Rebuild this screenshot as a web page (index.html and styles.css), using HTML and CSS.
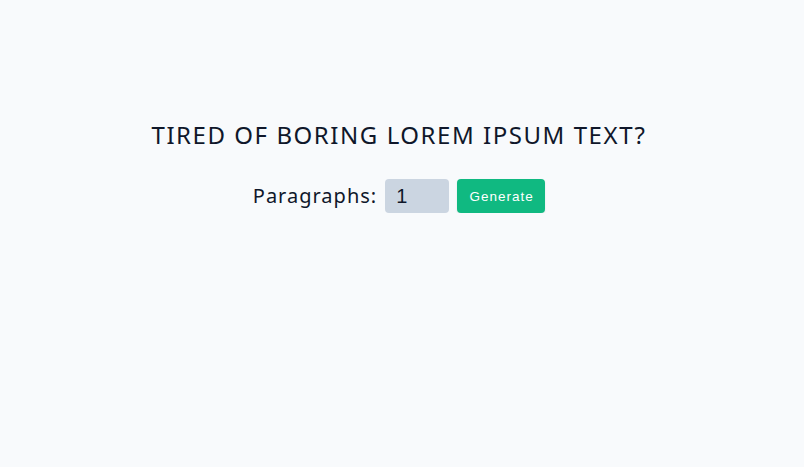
FILE: index.html
```html
<!DOCTYPE html>
<html>
<head>
<meta charset="utf-8">
<link rel="stylesheet" href="styles.css">
</head>
<body>
<main class="page">
  <h1 class="title">TIRED OF BORING LOREM IPSUM TEXT?</h1>
  <form class="form">
    <label class="label" for="amount">Paragraphs:</label>
    <input class="input" id="amount" type="number" value="1">
    <button class="btn" type="button">Generate</button>
  </form>
</main>
</body>
</html>
```
FILE: styles.css
```css
html, body {
  margin: 0;
  padding: 0;
  background: #f8fafc;
  color: #0f172a;
  font-family: "Noto Sans", "Open Sans", sans-serif;
}
.page {
  display: flex;
  flex-direction: column;
  align-items: center;
  padding-top: 117px;
  padding-right: 6px;
}
.title {
  margin: 0;
  font-size: 24px;
  font-weight: 400;
  letter-spacing: 1.55px;
  line-height: 36px;
}
.form {
  display: flex;
  align-items: center;
  gap: 8px;
  margin-top: 26px;
}
.label {
  font-size: 20px;
  letter-spacing: 1px;
  line-height: 28px;
}
.input {
  box-sizing: border-box;
  width: 64px;
  height: 34px;
  border: none;
  border-radius: 4px;
  background: #cbd5e1;
  padding: 0 11px;
  font-family: "Liberation Sans", Arial, sans-serif;
  font-size: 20px;
  color: #0f172a;
  -moz-appearance: textfield;
}
.input::-webkit-inner-spin-button,
.input::-webkit-outer-spin-button {
  -webkit-appearance: none;
  margin: 0;
}
.btn {
  box-sizing: border-box;
  width: 88px;
  height: 34px;
  border: none;
  border-radius: 4px;
  background: #10b981;
  color: #fff;
  font-family: "Liberation Sans", Arial, sans-serif;
  font-size: 13.5px;
  letter-spacing: 1px;
  padding: 0 0 0 1px;
  box-shadow: 0 1px 2px rgba(0,0,0,0.1);
}
```
